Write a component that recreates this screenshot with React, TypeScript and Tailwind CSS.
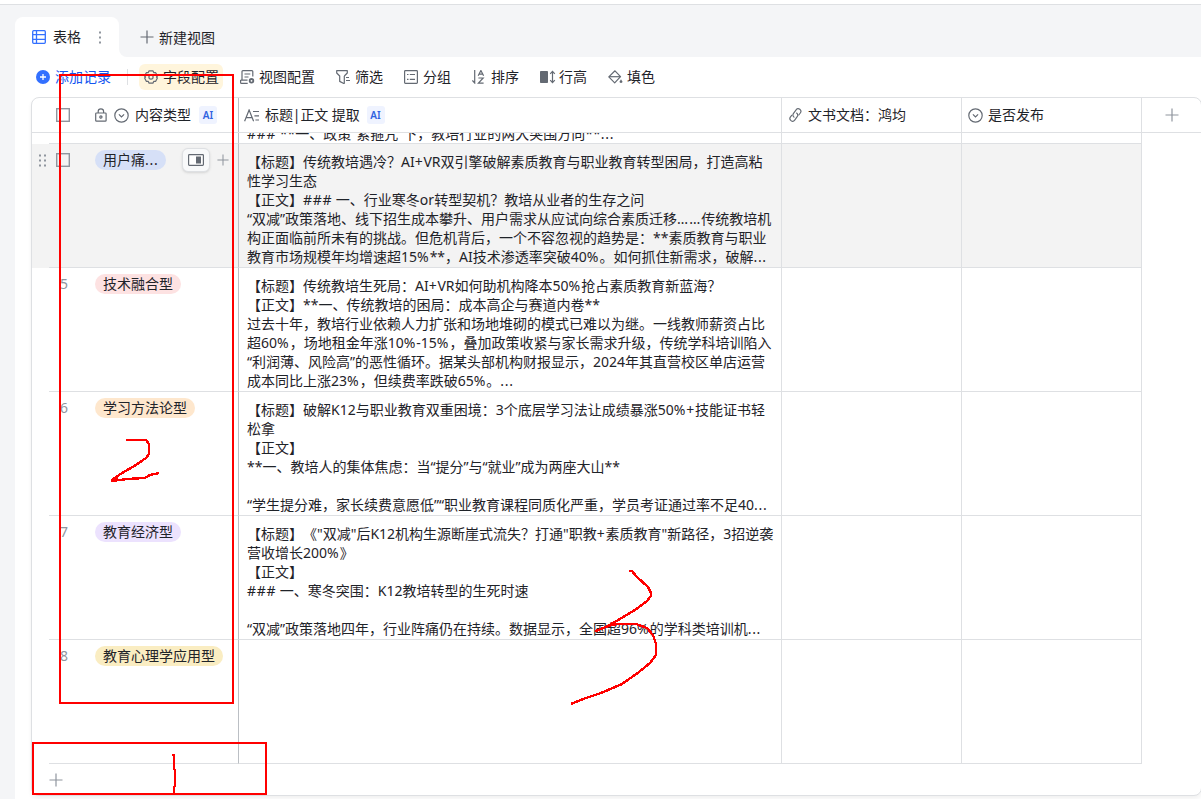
import React from "react";

type Icon = { className?: string };

const GridIcon = ({ className }: Icon) => (
  <svg className={className} width="14" height="14" viewBox="0 0 14 14" fill="none" stroke="#3370ff" strokeWidth="1.3">
    <rect x="0.7" y="0.7" width="12.6" height="12.6" rx="1" />
    <path d="M4.5 1v12M1 4.7h12M1 9.3h12" />
  </svg>
);

const Plus = ({ className, size = 14, color = "#8f959e" }: Icon & { size?: number; color?: string }) => (
  <svg className={className} width={size} height={size} viewBox="0 0 14 14" stroke={color} strokeWidth="1.2">
    <path d="M7 0.5v13M0.5 7h13" />
  </svg>
);

const AddIcon = () => (
  <svg width="14" height="14" viewBox="0 0 14 14">
    <circle cx="7" cy="7" r="7" fill="#3370ff" />
    <path d="M7 4v6M4 7h6" stroke="#fff" strokeWidth="1.3" />
  </svg>
);

const GearIcon = () => (
  <svg width="14" height="14" viewBox="0 0 14 14" fill="none" stroke="#646a73" strokeWidth="1.2" strokeLinejoin="round">
    <path d="M5.1 0.8h3.8l.8 1.8 2 .1L13.4 6l-.9 1 .9 1-1.7 3.3-2 .1-.8 1.8H5.1l-.8-1.8-2-.1L.6 8l.9-1-.9-1 1.7-3.3 2-.1z" />
    <circle cx="7" cy="7" r="2.1" />
  </svg>
);

const ViewConfigIcon = () => (
  <svg width="15" height="14" viewBox="0 0 15 14" fill="none" stroke="#646a73" strokeWidth="1.2">
    <path d="M12.8 6.5V1.6a.9.9 0 0 0-.9-.9H2.9a.9.9 0 0 0-.9.9V9.8M.6 10.1H7.5M.6 10.1v2.3a.9.9 0 0 0 .9.9h6.2M4.5 4h5.8M4.5 7h4" />
    <circle cx="11.5" cy="10.8" r="1.8" strokeWidth="1.8" />
  </svg>
);

const FilterIcon = () => (
  <svg width="14" height="14" viewBox="0 0 14 14" fill="none" stroke="#646a73" strokeWidth="1.2" strokeLinejoin="round">
    <path d="M8.3 6 11.3 3V.7H.7V3l3 3v5.4l3.6 1.9h1V6" />
    <path d="M10 7.5H13M10 10.5H14" />
  </svg>
);

const GroupIcon = () => (
  <svg width="14" height="14" viewBox="0 0 14 14" fill="none" stroke="#646a73" strokeWidth="1.2">
    <rect x="0.6" y="0.6" width="12.8" height="12.8" rx="0.8" />
    <path d="M3 4.5h1.5M5.8 4.5H11M3 9.3h1.5M5.8 9.3H11" />
  </svg>
);

const SortIcon = () => (
  <svg width="14" height="14" viewBox="0 0 14 14" fill="none" stroke="#646a73" strokeWidth="1.2">
    <path d="M2.7 0v13L0.4 10.5M6.2 5.8 8.9.5l2.7 5.3M7 4.2h3.8M6.4 8h4.8l-4.8 5.2h5.2" />
  </svg>
);

const HeightIcon = () => (
  <svg width="16" height="14" viewBox="0 0 16 14" fill="none" stroke="#646a73" strokeWidth="1.2">
    <rect x="0" y="1" width="8" height="12" rx="0.8" fill="#646a73" stroke="none" />
    <path d="M12.5 1.5v11M10.2 3.8l2.3-2.4 2.3 2.4M10.2 10.2l2.3 2.4 2.3-2.4" />
  </svg>
);

const FillIcon = () => (
  <svg width="15" height="14" viewBox="0 0 15 14" fill="none" stroke="#646a73" strokeWidth="1.2" strokeLinejoin="round">
    <path d="M7 .8 12.5 6.7 6.7 12.8.8 6.9z" />
    <path d="M1 6.7h11.3" />
    <path d="M13 9.2l1.2 2a1.3 1.3 0 1 1-2.4 0z" fill="#646a73" stroke="none" />
  </svg>
);

const LockIcon = () => (
  <svg width="12" height="14" viewBox="0 0 12 14" fill="none" stroke="#646a73" strokeWidth="1.2">
    <rect x="0.7" y="5" width="10.4" height="8.2" rx="0.8" />
    <path d="M3.2 5V3.5a2.7 2.7 0 0 1 5.4 0V5" />
    <circle cx="5.9" cy="9" r="1.1" />
  </svg>
);

const SelectIcon = () => (
  <svg width="15" height="15" viewBox="0 0 15 15" fill="none" stroke="#646a73" strokeWidth="1.2">
    <circle cx="7.5" cy="7.5" r="6.7" />
    <path d="M4.9 6.4 7.5 9l2.6-2.6" />
  </svg>
);

const TextIcon = () => (
  <svg width="16" height="13" viewBox="0 0 16 13" fill="none" stroke="#646a73" strokeWidth="1.2">
    <path d="M.6 12.3 5.1 1l4.5 11.3M2.2 8.6H8M9 2.5h6M10.4 6.8H15M11.4 11H15" />
  </svg>
);

const LinkIcon = () => (
  <svg width="13" height="14" viewBox="0 0 13 14" fill="none" stroke="#646a73" strokeWidth="1.15" strokeLinecap="round">
    <path d="M5 9.1C3.7 7.9 3.7 6.4 4.5 5.3l2.6-3.5c.9-1.2 2.5-1.4 3.7-.5s1.4 2.5.5 3.7L9.8 7" />
    <path d="M7.6 5c1.3 1.1 1.4 2.6.6 3.7l-2.5 3.4c-.9 1.2-2.5 1.4-3.7.5S.6 10.1 1.5 8.9L2.7 7.3" />
  </svg>
);

const Check = () => (
  <svg className="shrink-0" width="14" height="14" viewBox="0 0 14 14" fill="none" stroke="#8f959e" strokeWidth="1.4">
    <rect x="0.7" y="0.7" width="12.6" height="12.6" />
  </svg>
);

const AiBadge = () => (
  <span className="flex h-[18px] w-[18px] items-center justify-center rounded-[3px] bg-[#eff3ff] text-[10px] font-semibold leading-none text-[#2f62e0]">
    AI
  </span>
);

const spacing: Record<string, string> = {
  "###": "tracking-[0.7px]",
  "...": "tracking-[0.7px]",
  "……": "tracking-[1px]",
  "%": "tracking-[1px]",
  "+": "tracking-[0.7px]",
};

const Spaced = ({ text }: { text: string }) => (
  <>
    {text.split(/(###|\.\.\.|……|%|\+)/).map((part, i) =>
      spacing[part] ? (
        <span key={i} className={spacing[part]}>
          {part}
        </span>
      ) : (
        part
      ),
    )}
  </>
);

type Row = { n?: number; tag: string; tagBg: string; lines: string[] };

const rows: Row[] = [
  {
    tag: "用户痛...",
    tagBg: "bg-[#d6e0f7]",
    lines: [
      "【标题】传统教培遇冷？AI+VR双引擎破解素质教育与职业教育转型困局，打造高粘",
      "性学习生态",
      "【正文】### 一、行业寒冬or转型契机？教培从业者的生存之问",
      "“双减”政策落地、线下招生成本攀升、用户需求从应试向综合素质迁移……传统教培机",
      "构正面临前所未有的挑战。但危机背后，一个不容忽视的趋势是：**素质教育与职业",
      "教育市场规模年均增速超15%**，AI技术渗透率突破40%。如何抓住新需求，破解...",
    ],
  },
  {
    n: 5,
    tag: "技术融合型",
    tagBg: "bg-[#fde2e2]",
    lines: [
      "【标题】传统教培生死局：AI+VR如何助机构降本50%抢占素质教育新蓝海？",
      "【正文】**一、传统教培的困局：成本高企与赛道内卷**",
      "过去十年，教培行业依赖人力扩张和场地堆砌的模式已难以为继。一线教师薪资占比",
      "超60%，场地租金年涨10%-15%，叠加政策收紧与家长需求升级，传统学科培训陷入",
      "“利润薄、风险高”的恶性循环。据某头部机构财报显示，2024年其直营校区单店运营",
      "成本同比上涨23%，但续费率跌破65%。...",
    ],
  },
  {
    n: 6,
    tag: "学习方法论型",
    tagBg: "bg-[#fee7cd]",
    lines: [
      "【标题】破解K12与职业教育双重困境：3个底层学习法让成绩暴涨50%+技能证书轻",
      "松拿",
      "【正文】",
      "**一、教培人的集体焦虑：当“提分”与“就业”成为两座大山**",
      "",
      "“学生提分难，家长续费意愿低”“职业教育课程同质化严重，学员考证通过率不足40...",
    ],
  },
  {
    n: 7,
    tag: "教育经济型",
    tagBg: "bg-[#ece2fe]",
    lines: [
      "【标题】《\"双减\"后K12机构生源断崖式流失？打通\"职教+素质教育\"新路径，3招逆袭",
      "营收增长200%》",
      "【正文】",
      "### 一、寒冬突围：K12教培转型的生死时速",
      "",
      "“双减”政策落地四年，行业阵痛仍在持续。数据显示，全国超96%的学科类培训机...",
    ],
  },
  { n: 8, tag: "教育心理学应用型", tagBg: "bg-[#faedc2]", lines: [] },
];

function TableRow({ row }: { row: Row }) {
  const active = row.n === undefined;
  return (
    <div className={`flex h-[124px] w-[1110px] shrink-0 ${active ? "bg-[#f3f3f3]" : ""}`}>
      <div className="flex w-[17px] justify-center pt-[10px]">
        {active && (
          <svg className="ml-[5px]" width="8" height="13" viewBox="0 0 8 13" fill="#8f959e">
            {[1, 6, 11].map((y) => (
              <g key={y}>
                <rect x="0" y={y - 0.5} width="2" height="2" />
                <rect x="5" y={y - 0.5} width="2" height="2" />
              </g>
            ))}
          </svg>
        )}
      </div>
      <div className="flex w-[190px] border-b border-r border-b-[#dee0e3] border-r-[#bbbfc4]">
        <div className="flex w-[46px] pl-[7px] pt-[9px]">
          {active ? <Check /> : <span className="-mt-px pl-1 leading-[15px] text-[#8f959e]">{row.n}</span>}
        </div>
        <div className="flex flex-1 items-start pt-1.5">
          <span className={`h-5 rounded-full px-2 leading-5 whitespace-nowrap ${row.tagBg}`}>
            <Spaced text={row.tag} />
          </span>
          {active && (
            <>
              <span className="-mt-[2px] ml-4 flex h-6 w-[28px] shrink-0 items-center justify-center rounded-md border border-[#dee0e3] bg-[#f8f9fa] shadow-sm">
                <svg width="16" height="12" viewBox="0 0 16 12">
                  <rect x="0.6" y="0.6" width="14.8" height="10.8" rx="0.8" fill="#fff" stroke="#646a73" strokeWidth="1.2" />
                  <rect x="8" y="2.5" width="5" height="7" fill="#646a73" />
                </svg>
              </span>
              <Plus className="ml-[7px] mt-1 shrink-0" size={12} />
            </>
          )}
        </div>
      </div>
      <div className="w-[543px] border-b border-r border-[#dee0e3] pl-2 pt-2">
        {row.lines.map((text, i) => (
          <div key={i} className="h-[19px] leading-[19px] whitespace-pre">
            <Spaced text={text} />
          </div>
        ))}
      </div>
      <div className="w-[180px] border-b border-r border-[#dee0e3]" />
      <div className="w-[180px] border-b border-r border-[#dee0e3]" />
    </div>
  );
}

const tools = [
  { icon: <ViewConfigIcon />, label: "视图配置", gap: "ml-[17px]" },
  { icon: <FilterIcon />, label: "筛选", gap: "ml-[21px]" },
  { icon: <GroupIcon />, label: "分组", gap: "ml-[21px]" },
  { icon: <SortIcon />, label: "排序", gap: "ml-[21px]" },
  { icon: <HeightIcon />, label: "行高", gap: "ml-[21px]" },
  { icon: <FillIcon />, label: "填色", gap: "ml-[21px]" },
];

export default function App() {
  return (
    <div className="relative flex h-[799px] w-[1201px] flex-col overflow-hidden bg-[#f4f5f7] font-['Noto_Sans','Noto_Sans_CJK_SC',sans-serif] text-[14px] text-[#1f2329] [text-spacing-trim:space-all]">
      <div className="h-[5px] shrink-0 border-b border-[#dee0e3] bg-white" />
      <div className="ml-[15px] mt-3 flex h-10 shrink-0">
        <div className="flex w-[104px] items-center rounded-t-lg bg-white pl-[17px]">
          <GridIcon />
          <span className="ml-[7px] pb-px leading-5">表格</span>
          <svg className="ml-[17px]" width="4" height="13" viewBox="0 0 4 13" fill="#8f959e">
            <rect x="1" y="0.5" width="2" height="2" />
            <rect x="1" y="5.5" width="2" height="2" />
            <rect x="1" y="10.5" width="2" height="2" />
          </svg>
        </div>
        <div className="flex w-2 items-end bg-white">
          <span className="h-full w-2 rounded-bl-lg bg-[#f4f5f7]" />
        </div>
        <div className="ml-[13px] flex items-center">
          <Plus color="#646a73" />
          <span className="ml-[5px] pt-0.5 leading-5">新建视图</span>
        </div>
      </div>
      <div className="ml-[15px] flex min-h-0 flex-1 flex-col bg-white">
        <div className="flex h-10 shrink-0 items-center pl-[21px]">
          <AddIcon />
          <span className="ml-[5px] pb-0.5 text-[#1456f0]">添加记录</span>
          <span className="ml-4 h-4 w-px bg-[#dee0e3]" />
          <span className="ml-[11px] flex h-[26px] w-[84px] items-center rounded-md bg-[#fff5dc] pl-[5px]">
            <GearIcon />
            <span className="ml-[5px] pb-0.5">字段配置</span>
          </span>
          {tools.map((t) => (
            <span key={t.label} className={`flex items-center ${t.gap}`}>
              <span className="flex w-[19px]">{t.icon}</span>
              <span className="pb-0.5">{t.label}</span>
            </span>
          ))}
        </div>
        <div className="ml-4 flex h-[699px] w-[1171px] shrink-0 flex-col overflow-hidden rounded-lg border border-[#dee0e3] bg-white shadow-[0_3px_4px_rgba(31,35,41,0.06)]">
          <div className="flex h-[35px] shrink-0 border-b border-[#dee0e3]">
            <div className="flex w-[207px] items-center border-r border-[#bbbfc4] pl-6">
              <Check />
              <span className="ml-[25px]"><LockIcon /></span>
              <span className="ml-[7px]"><SelectIcon /></span>
              <span className="ml-[6px] mr-2 pb-0.5">内容类型</span>
              <AiBadge />
            </div>
            <div className="flex w-[543px] items-center border-r border-[#dee0e3] pl-[5px]">
              <TextIcon />
              <span className="ml-[5px] mr-[7px] pb-0.5 tracking-[-0.1px]">标题|正文 提取</span>
              <AiBadge />
            </div>
            <div className="flex w-[180px] items-center border-r border-[#dee0e3] pl-[7px]">
              <LinkIcon />
              <span className="ml-[6px] pb-0.5">文书文档：鸿均</span>
            </div>
            <div className="flex w-[180px] items-center border-r border-[#dee0e3] pl-[6px]">
              <SelectIcon />
              <span className="ml-[5px] pb-0.5">是否发布</span>
            </div>
            <div className="flex flex-1 items-center justify-center">
              <Plus />
            </div>
          </div>
          <div className="flex h-[11px] w-[1110px] shrink-0">
            <div className="w-[17px]" />
            <div className="w-[190px] border-b border-r border-b-[#dee0e3] border-r-[#bbbfc4]" />
            <div className="flex w-[543px] items-end overflow-hidden border-b border-r border-[#dee0e3] pl-2">
              <span className="leading-[19px] whitespace-pre">
                <Spaced text="### **一、政策“紧箍咒”下，教培行业的两大突围方向**..." />
              </span>
            </div>
            <div className="w-[180px] border-b border-r border-[#dee0e3]" />
            <div className="w-[180px] border-b border-r border-[#dee0e3]" />
          </div>
          {rows.map((r) => (
            <TableRow key={r.tag} row={r} />
          ))}
          <div className="flex flex-1 items-center pl-[17px]">
            <Plus size={14} />
          </div>
        </div>
      </div>
      <svg className="pointer-events-none absolute inset-0" width="1201" height="799" viewBox="0 0 1201 799" fill="none" stroke="#ff0000" strokeWidth="2" shapeRendering="crispEdges">
        <rect x="60" y="75" width="173" height="628" />
        <rect x="33" y="743" width="233" height="51" />
        <path d="M172 755h2v14l1 1v16l-1 1v6" />
        <g strokeWidth="2.4" strokeLinejoin="round">
          <path d="M126 440h20l3 4v10l-3 4-10 7-14 8-10 7v1l15-2 18-1 5-3 9-2M113 480l5-3" />
          <path d="M629 571h3l4 5 12 11 3 6v3l-4 5-12 9-22 13-7 4-10 4 12-5 9-2h19l11 4 6 7 3 9v11l-6 8-11 9-17 12-21 9-15 5-15 6" />
        </g>
      </svg>
    </div>
  );
}
